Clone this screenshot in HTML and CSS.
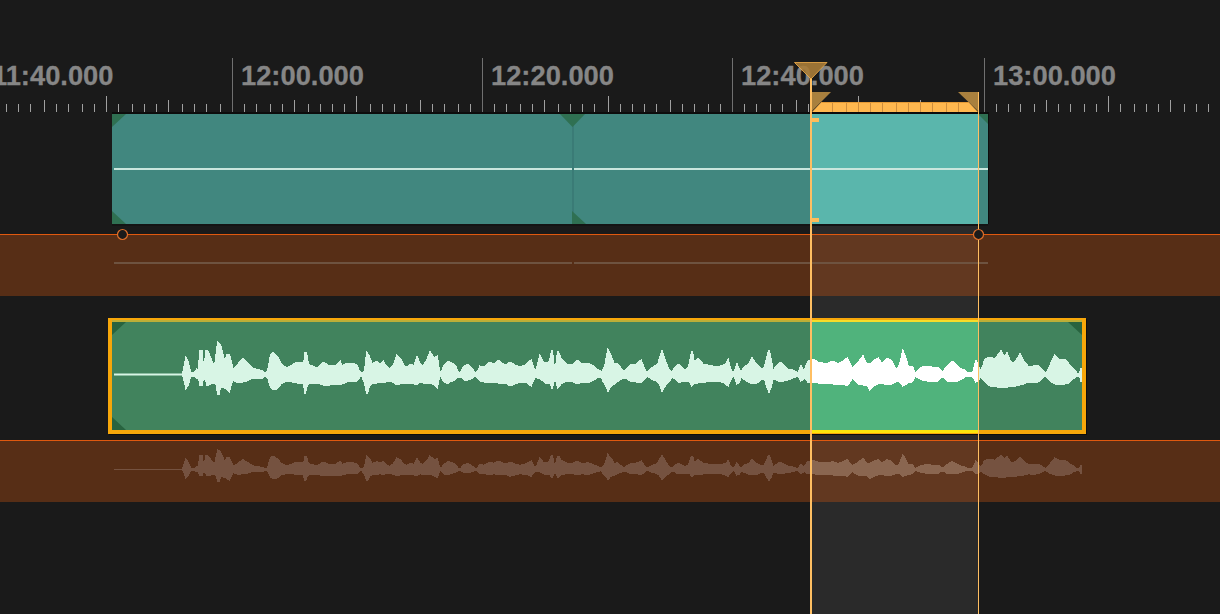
FILE: index.html
```html
<!DOCTYPE html>
<html lang="en">
<head>
    <meta charset="UTF-8">
    <meta name="viewport" content="width=device-width, initial-scale=1.0">
    <title>Timeline</title>
    <link rel="stylesheet" href="styles.css">
</head>
<body>
    <div class="timeline">
        <div class="sel-column"></div>

        <!-- Time ruler -->
        <div class="ruler">
            <div class="ruler-seg ruler-seg-first">11:40.000</div>
            <div class="ruler-seg">12:00.000</div>
            <div class="ruler-seg">12:20.000</div>
            <div class="ruler-seg ruler-seg-long">12:40.000</div>
            <div class="ruler-seg">13:00.000</div>
            <svg class="ticks" width="1220" height="112" viewBox="0 0 1220 112">
                <path class="tick" d="M6.5 104v8M18.5 104v8M30.5 104v8M56.5 104v8M68.5 104v8M82.5 104v8M94.5 104v8M118.5 104v8M132.5 104v8M144.5 104v8M156.5 104v8M182.5 104v8M194.5 104v8M206.5 104v8M220.5 104v8M244.5 104v8M256.5 104v8M270.5 104v8M282.5 104v8M308.5 104v8M320.5 104v8M332.5 104v8M344.5 104v8M370.5 104v8M382.5 104v8M394.5 104v8M406.5 104v8M432.5 104v8M444.5 104v8M458.5 104v8M470.5 104v8M494.5 104v8M506.5 104v8M520.5 104v8M532.5 104v8M558.5 104v8M570.5 104v8M582.5 104v8M594.5 104v8M620.5 104v8M632.5 104v8M644.5 104v8M656.5 104v8M682.5 104v8M694.5 104v8M708.5 104v8M720.5 104v8M744.5 104v8M756.5 104v8M770.5 104v8M782.5 104v8M808.5 104v8M996.5 104v8M1008.5 104v8M1020.5 104v8M1034.5 104v8M1058.5 104v8M1070.5 104v8M1084.5 104v8M1096.5 104v8M1120.5 104v8M1134.5 104v8M1146.5 104v8M1158.5 104v8M1184.5 104v8M1196.5 104v8M1208.5 104v8"/>
                <path class="tick" d="M44.5 100v12M168.5 100v12M294.5 100v12M420.5 100v12M544.5 100v12M670.5 100v12M796.5 100v12M920.5 100v12M1046.5 100v12M1170.5 100v12"/>
                <path class="tick" d="M106.5 96v16M356.5 96v16M608.5 96v16M858.5 96v16M1108.5 96v16"/>
            </svg>
        </div>

        <!-- Video clip -->
        <div class="clip clip-video">
            <div class="part part-first"></div>
            <div class="part-split"></div>
            <div class="part part-second"></div>
            <div class="part part-sel"></div>
            <div class="part part-end"></div>
            <div class="clip-line"></div>
            <div class="clip-line-gap"></div>
            <span class="corner corner-tl"></span>
            <span class="corner corner-bl"></span>
            <span class="corner corner-tr"></span>
            <span class="corner corner-mid-top"></span>
            <span class="corner corner-mid-bottom"></span>
        </div>

        <!-- Video automation lane -->
        <div class="lane lane-video">
            <div class="lane-sel"></div>
            <div class="lane-rule lane-rule-left"></div>
            <div class="lane-rule lane-rule-right"></div>
        </div>

        <!-- Audio clip -->
        <div class="clip clip-audio">
            <div class="part part-a"></div>
            <div class="part part-a-sel"></div>
            <div class="part part-a-end"></div>
            <span class="corner corner-tl"></span>
            <span class="corner corner-bl"></span>
            <span class="corner corner-tr"></span>
            <svg class="wave" width="970" height="108" viewBox="112 -52.5 970 108">
                <defs>
                    <clipPath id="sel-range"><rect x="812" y="-60" width="166" height="120"/></clipPath>
                    <g id="wave-shape">
                        <path class="wave-axis" d="M114 0H1082"/>
                        <path class="wave-body" d="M183 -1L184 -6L186 -16L188 -12L190 -3L192 -1L195 -2L197 -5L199 -3L200 -24L202 -24L203 -4L205 -8L206 -24L207 -24L209 -20L212 -12L215 -8L218 -32L220 -30L223 -18L225 -10L227 -20L229 -20L231 -12L233 -5L238 -10L243 -16L247 -12L253 -6L263 -3L265 -1L268 -3L271 -20L273 -22L277 -18L281 -10L287 -6L292 -9L297 -12L302 -12L304 -6L305 -22L306 -22L308 -10L317 -6L323 -12L328 -9L335 -8L340 -13L342 -8L347 -11L353 -11L357 -9L359 -3L362 -1L365 -4L367 -21L369 -18L372 -10L377 -13L380 -10L383 -13L386 -8L390 -5L394 -10L397 -19L400 -16L404 -8L407 -7L411 -10L414 -8L417 -17L420 -10L423 -8L427 -14L430 -22L434 -16L437 -18L439 -4L441 -1L444 -8L448 -13L450 -12L455 -9L458 -2L461 -2L464 -8L468 -10L471 -7L475 -1L478 -3L480 -8L484 -7L490 -12L494 -10L498 -14L502 -11L506 -9L510 -12L515 -9L520 -7L525 -9L531 -14L533 -8L535 -2L537 -6L540 -18L543 -12L547 -11L550 -14L552 -24L554 -6L556 -8L558 -23L561 -15L567 -10L572 -9L577 -14L582 -10L588 -11L592 -9L597 -5L602 -2L605 -8L608 -24L611 -18L614 -10L617 -11L621 -6L624 -3L627 -6L630 -9L636 -10L641 -14L644 -6L647 -1L650 -5L653 -7L658 -10L662 -23L665 -14L668 -6L672 -2L675 -7L678 -10L682 -7L685 -4L689 -8L692 -23L694 -12L698 -16L703 -10L713 -8L720 -8L726 -10L728 -14L730 -6L733 -1L735 -4L737 -10L739 -5L741 -2L745 -8L749 -10L752 -16L756 -10L760 -7L762 -5L765 -8L768 -20L769 -24L771 -14L773 -3L776 -8L780 -12L784 -9L788 -5L793 -4L798 -1L801 -8L804 -3L808 -13L813 -15L818 -12L823 -11L828 -11L833 -13L838 -10L843 -13L847 -16L850 -10L852 -6L857 -10L860 -14L863 -18L866 -11L870 -10L874 -14L878 -16L882 -10L887 -16L891 -14L894 -8L897 -5L900 -10L903 -23L905 -18L908 -8L912 -8L915 -1L918 -4L922 -7L927 -8L932 -7L938 -7L941 -4L943 -2L947 -8L952 -13L956 -10L960 -6L962 -5L965 -4L968 -1L973 -2L976 -13L978 -9L980 -2L983 -8L985 -15L990 -17L995 -15L1001 -23L1004 -17L1007 -21L1010 -13L1013 -11L1017 -15L1020 -20L1023 -14L1028 -8L1033 -8L1038 -9L1042 -5L1045 -1L1048 -4L1052 -13L1055 -19L1059 -15L1062 -14L1065 -15L1069 -10L1073 -6L1077 -1L1080 -1L1081 -6L1082 -6L1082 6L1081 6L1080 1L1077 1L1073 4L1069 8L1065 9L1060 9L1055 9L1050 6L1045 1L1042 4L1038 7L1033 8L1028 7L1024 9L1020 10L1016 11L1013 11L1008 12L1001 13L997 12L990 11L985 7L983 5L980 2L978 6L976 7L973 2L968 1L965 2L962 4L958 6L952 7L947 6L943 2L941 3L938 6L932 6L927 6L922 5L918 3L915 1L912 7L908 8L903 11L900 7L897 6L892 9L887 10L882 8L878 9L874 11L870 15L867 10L863 10L858 9L852 3L850 7L847 11L843 9L838 9L833 9L828 8L823 9L818 8L813 7L808 7L805 3L801 6L798 1L793 3L788 5L784 6L780 7L776 5L773 3L771 12L769 17L767 12L765 5L762 4L757 8L752 9L748 7L745 5L741 2L739 8L737 9L735 3L733 1L730 6L728 11L724 8L718 6L713 6L706 7L698 8L694 9L692 11L690 7L685 6L681 7L678 7L675 4L672 2L668 8L665 11L662 16L660 10L656 6L653 5L650 3L647 1L644 5L641 8L636 7L630 6L627 4L624 3L620 5L617 7L613 10L610 12L608 16L606 11L603 6L602 2L597 3L592 6L588 8L582 7L577 9L572 6L567 6L561 9L558 13L556 6L554 6L552 13L550 8L547 9L543 6L540 4L537 3L535 2L533 6L531 11L527 8L520 7L515 9L510 11L506 8L498 8L494 7L490 8L484 7L480 6L478 3L475 1L471 4L468 5L464 5L461 2L458 2L455 5L450 7L448 9L444 7L441 1L439 3L437 13L434 10L430 8L427 8L423 8L420 7L417 10L412 8L407 9L403 8L397 10L394 8L390 6L386 7L383 8L380 7L377 8L372 8L369 12L367 19L365 9L362 1L360 2L357 6L353 6L347 7L342 9L340 10L335 9L330 10L323 10L320 9L317 8L310 8L307 10L305 19L304 8L302 8L297 8L292 7L287 6L281 9L277 14L273 15L271 13L268 3L265 1L263 3L253 3L247 6L243 7L238 8L233 5L231 10L229 17L226 14L223 12L220 12L219 19L218 19L216 8L212 8L209 10L207 10L206 5L203 3L202 10L200 10L199 3L197 4L195 2L192 1L190 3L188 10L186 13L184 4L183 1Z"/>
                    </g>
                </defs>
                <use class="wave-main" href="#wave-shape"/>
                <g clip-path="url(#sel-range)"><use class="wave-main-sel" href="#wave-shape"/></g>
            </svg>
        </div>

        <!-- Audio automation lane -->
        <div class="lane lane-audio">
            <div class="lane-sel"></div>
            <svg class="wave wave-ghost" width="970" height="62" viewBox="112 -28.5 970 62">
                <use class="ghost-main" href="#wave-shape" transform="scale(1 .6)"/>
                <g clip-path="url(#sel-range)"><use class="ghost-sel" href="#wave-shape" transform="scale(1 .6)"/></g>
            </svg>
        </div>

        <!-- Playhead, selection range and markers -->
        <svg class="markers" width="1220" height="614" viewBox="0 0 1220 614">
            <path class="sel-bar" d="M821 102.5H969L978 112H812Z"/>
            <path class="sel-bar-top" d="M821 102.5H969"/>
            <path class="sel-bar-div" d="M832.5 103v9M846.5 103v9M858.5 103v9M870.5 103v9M882.5 103v9M896.5 103v9M908.5 103v9M920.5 103v9M932.5 103v9M946.5 103v9M958.5 103v9"/>
            <polygon class="flag" points="811,92 831,92 811,112"/>
            <polygon class="flag" points="958,92 979,92 979,112"/>
            <rect class="tab" x="812" y="118" width="7" height="4"/>
            <rect class="tab" x="812" y="218" width="7" height="4"/>
            <rect class="sel-line" x="810" y="78" width="2" height="536"/>
            <rect class="sel-line" x="978" y="92" width="1" height="522"/>
            <polygon class="playhead" points="794.5,62.5 827,62.5 811,79"/>
            <circle class="handle" cx="122.5" cy="234.5" r="5"/>
            <circle class="handle" cx="978.5" cy="234.5" r="5"/>
        </svg>
    </div>
</body>
</html>
```

FILE: styles.css
```css
/* General Styles */
html, body {
    margin: 0;
    padding: 0;
    height: 100%;
    overflow: hidden;
    background-color: #1a1a1a;
}

.timeline {
    position: relative;
    width: 1220px;
    height: 614px;
    overflow: hidden;
    font-family: "Liberation Sans", Arial, sans-serif;
}

/* Lighter band behind the selected range */
.sel-column {
    position: absolute;
    left: 812px;
    top: 224px;
    bottom: 0;
    width: 166px;
    background-color: #2a2a2a;
}

/* Ruler */
.ruler {
    position: relative;
    display: flex;
    height: 54px;
    padding-top: 58px;
    margin-left: -18px;
}

.ruler-seg {
    flex: none;
    box-sizing: border-box;
    width: 250px;
    height: 54px;
    padding: 2px 0 0 8px;
    border-left: 1px solid #707070;
    font-size: 27.3px;
    font-weight: bold;
    line-height: 31px;
    color: #868686;
    -webkit-text-stroke: 0.3px #868686;
}

.ruler-seg-first {
    padding-left: 9px;
}

.ruler-seg-long {
    width: 252px;
}

.ticks {
    position: absolute;
    left: 18px;
    top: 0;
}

.tick {
    fill: none;
    stroke: #a0a0a0;
    stroke-width: 1;
}

/* Clips */
.clip {
    position: relative;
    display: flex;
    box-sizing: border-box;
}

.clip-video {
    width: 876px;
    height: 112px;
    margin-left: 112px;
    border-top: 2px solid #0d0d0d;
    box-shadow: 1px 0 0 #0d0d0d, 0 2px 0 #141414;
}

.part {
    flex: none;
    height: 100%;
}

.part-first {
    width: 460px;
    background-color: #41877f;
}

.part-split {
    flex: none;
    width: 2px;
    background-color: #3a7b76;
}

.part-second {
    width: 238px;
    background-color: #41877f;
}

.part-sel {
    width: 166px;
    background-color: #5ab6ac;
}

.part-end {
    width: 10px;
    background-color: #41877f;
}

.clip-line {
    position: absolute;
    left: 2px;
    right: 0;
    top: 54px;
    height: 2px;
    background-color: #c9e6dd;
}

.clip-line-gap {
    position: absolute;
    left: 460px;
    top: 54px;
    width: 2px;
    height: 2px;
    background-color: #3a7b76;
}

.clip-audio {
    width: 978px;
    height: 116px;
    margin: 22px 0 0 108px;
    border-style: solid;
    border-color: #f7a70a;
    border-width: 2px 4px 1px 4px;
    box-shadow: 1px 1px 0 #0d0d0d;
}

.part-a {
    width: 700px;
    background-color: #41835d;
    border-top: 2px solid #bcae38;
    border-bottom: 3px solid #f7a70a;
    box-sizing: border-box;
}

.part-a-sel {
    width: 166px;
    background-color: #50b37c;
    border-top: 2px solid #f7dc2a;
    border-bottom: 3px solid #fce50c;
    box-sizing: border-box;
}

.part-a-end {
    width: 104px;
    background-color: #41835d;
    border-top: 2px solid #bcae38;
    border-bottom: 3px solid #f7a70a;
    box-sizing: border-box;
}

/* Corner fade handles */
.corner {
    position: absolute;
    width: 14px;
    height: 13px;
    background-color: #2f7052;
}

.corner-tl {
    left: 0;
    top: 0;
    clip-path: polygon(0 0, 100% 0, 0 100%);
}

.corner-bl {
    left: 0;
    bottom: 0;
    clip-path: polygon(0 0, 100% 100%, 0 100%);
}

.corner-tr {
    right: 0;
    top: 0;
    clip-path: polygon(0 0, 100% 0, 100% 100%);
}

.corner-mid-top {
    left: 448px;
    top: 0;
    width: 25px;
    clip-path: polygon(0 0, 100% 0, 50% 100%);
}

.corner-mid-bottom {
    left: 460px;
    bottom: 0;
    clip-path: polygon(0 0, 100% 100%, 0 100%);
}

.clip-video .corner-tr {
    width: 10px;
    height: 10px;
}

.clip-audio .corner {
    background-color: #28633f;
}

.clip-audio .corner-tl,
.clip-audio .corner-tr {
    top: 2px;
}

.clip-audio .corner-bl {
    bottom: 3px;
}

/* Automation lanes */
.lane {
    position: relative;
    display: flex;
    box-sizing: border-box;
    height: 62px;
    border-top: 1px solid #e0590f;
    background-color: #572e16;
}

.lane-video {
    margin-top: 10px;
    padding: 27px 0 0 114px;
}

.lane-audio {
    margin-top: 6px;
}

.lane-sel {
    position: absolute;
    left: 812px;
    top: 0;
    bottom: 0;
    width: 166px;
    background-color: #623820;
}

.lane-rule {
    position: relative;
    height: 2px;
    background-color: #6e5340;
}

.lane-rule-left {
    width: 458px;
}

.lane-rule-right {
    width: 414px;
    margin-left: 2px;
}

/* Waveform */
.wave {
    position: absolute;
    left: 0;
    top: 2px;
}

.wave-ghost {
    left: 112px;
    top: 0;
}

.wave-axis {
    fill: none;
    stroke: currentColor;
    stroke-width: 2;
}

.wave-body {
    stroke: currentColor;
    stroke-width: 2;
    stroke-linejoin: miter;
    shape-rendering: crispEdges;
}

.wave-main {
    color: #d8f5e5;
    fill: #d8f5e5;
}

.wave-main-sel {
    color: #ffffff;
    fill: #ffffff;
}

.ghost-main {
    color: #755240;
    fill: #755240;
}

.ghost-sel {
    color: #8a6650;
    fill: #8a6650;
}

/* Markers on top of everything */
.markers {
    position: absolute;
    left: 0;
    top: 0;
}

.sel-bar {
    fill: #ffb84f;
}

.sel-bar-top {
    fill: none;
    stroke: #e59a35;
}

.sel-bar-div {
    fill: none;
    stroke: #cf8e3c;
}

.flag {
    fill: #a9803e;
}

.tab {
    fill: #ffbd5a;
}

.sel-line {
    fill: #ffbf62;
}

.playhead {
    fill: #a87c38;
    fill-opacity: 0.9;
    stroke: #f5b04a;
    stroke-width: 0.8;
}

.handle {
    fill: #1b1b1b;
    stroke: #e0702a;
    stroke-width: 1.2;
}
```
